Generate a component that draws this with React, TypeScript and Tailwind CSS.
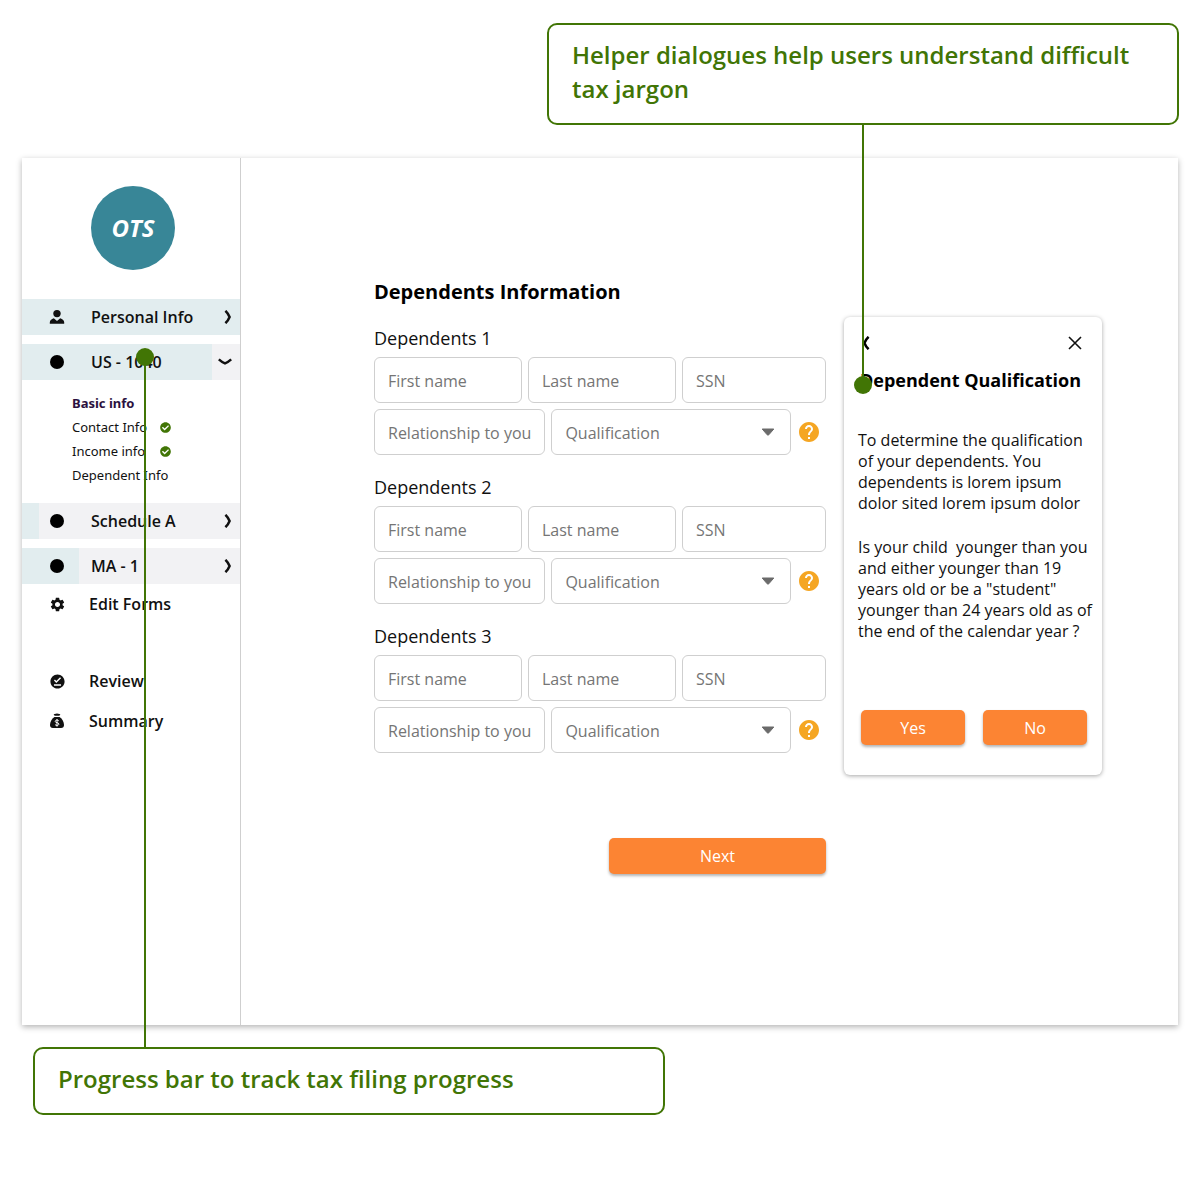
import React from "react";
import { FaCheckCircle } from "react-icons/fa";
import { MdHelp, MdOfflinePin, MdSettings } from "react-icons/md";

function ChevronRight({ className }: { className?: string }) {
  return (
    <svg viewBox="0 0 8 14" className={className} aria-hidden="true">
      <path d="M1.4 0.8 Q4.2 3.4 5.6 7 Q4.2 10.6 1.4 13.2" fill="none" stroke="currentColor" strokeWidth="2.5" />
    </svg>
  );
}

function ChevronDown() {
  return (
    <svg viewBox="0 0 14 8" className="h-2 w-3.5" aria-hidden="true">
      <path d="M0.8 1.4 Q3.6 4 7 5.4 Q10.4 4 13.2 1.4" fill="none" stroke="currentColor" strokeWidth="2.5" />
    </svg>
  );
}

function PersonIcon() {
  return (
    <svg viewBox="0 0 16 16" className="size-4" fill="currentColor" aria-hidden="true">
      <circle cx="8" cy="4.6" r="3.7" />
      <path d="M0.8 14.8v-1.300C0.800 11.400 2.300 10 4.800 9.200L8 12l3.200-2.800c2.500.8 4 2.200 4 4.300v1.300z" />
    </svg>
  );
}

function MoneyBagIcon() {
  return (
    <svg viewBox="0 0 16 16" className="size-4" aria-hidden="true">
      <path d="M4.6 1.2 8 .6l3.400.6-1 1.600H5.600z" fill="currentColor" />
      <path d="M5.400 4h5.200c2.600 1.800 4.400 5 4.400 8 0 2.100-1 3-2.900 3H3.900C2 15 1 14.100 1 12c0-3 1.800-6.200 4.400-8z" fill="currentColor" />
      <path d="M9.800 7.900C9.400 7.300 8.800 7.100 8 7.100c-1 0-1.800.5-1.800 1.300 0 1.800 3.700.8 3.700 2.600 0 .9-.8 1.400-1.900 1.400-.9 0-1.600-.3-2-.9M8 6v7.600" fill="none" stroke="#fff" strokeWidth="1" />
    </svg>
  );
}

const Dot = () => <span className="size-3.5 rounded-full bg-black" />;

type Step = { label: string; icon: React.ReactNode; progress: number; open?: boolean };

function StepRow({ label, icon, progress, open }: Step) {
  return (
    <button
      type="button"
      aria-expanded={!!open}
      className="relative flex h-9 w-full items-center bg-[#f2f2f4] pr-2 pl-[27px] text-left"
    >
      <span className="absolute inset-y-0 left-0 bg-[#e2edef]" style={{ width: `${progress}%` }} />
      <span className="relative flex w-4 justify-center">{icon}</span>
      <span className="relative ml-[26px] flex-1">{label}</span>
      <span className="relative">{open ? <ChevronDown /> : <ChevronRight className="h-3.5 w-2" />}</span>
    </button>
  );
}

function NavLink({ label, icon, className }: { label: string; icon: React.ReactNode; className: string }) {
  return (
    <a href="#" className={`flex h-6 items-center pl-[27px] ${className}`}>
      <span className="flex w-4 justify-center">{icon}</span>
      <span className="ml-6">{label}</span>
    </a>
  );
}

function Sidebar() {
  const sub = [
    { label: "Basic info", current: true },
    { label: "Contact Info", done: true },
    { label: "Income info", done: true },
    { label: "Dependent Info" },
  ];
  return (
    <aside className="w-[219px] shrink-0 border-r border-[#cfcfcf] pt-7 text-base font-semibold text-[#111]">
      <div className="flex justify-center pl-1">
        <div className="flex size-[84px] items-center justify-center rounded-full bg-[#388697] text-2xl font-bold text-white italic">
          OTS
        </div>
      </div>
      <nav className="mt-[29px]">
        <StepRow label="Personal Info" icon={<PersonIcon />} progress={100} />
        <div className="h-[9px]" />
        <StepRow label="US - 1040" icon={<Dot />} progress={87} open />
        <ul className="mt-[11px] mb-4 pl-[50px] font-['Noto_Sans',sans-serif] text-[13px] leading-6 font-normal">
          {sub.map((s) => (
            <li key={s.label} className="flex items-center">
              <a href="#" className={s.current ? "w-[88px] font-bold whitespace-nowrap text-[#2b1140]" : "w-[88px] whitespace-nowrap"}>
                {s.label}
              </a>
              {s.done && <FaCheckCircle className="size-[11px] text-[#417505]" />}
            </li>
          ))}
        </ul>
        <StepRow label="Schedule A" icon={<Dot />} progress={8} />
        <div className="h-[9px]" />
        <StepRow label="MA - 1" icon={<Dot />} progress={26} />
        <NavLink label="Edit Forms" icon={<MdSettings className="size-[17px] shrink-0" />} className="mt-2" />
        <NavLink label="Review" icon={<MdOfflinePin className="size-[17px] shrink-0" />} className="mt-[53px]" />
        <NavLink label="Summary" icon={<MoneyBagIcon />} className="mt-4" />
      </nav>
    </aside>
  );
}

const field =
  "h-[46px] w-full min-w-0 rounded-md border border-[#cfcfcf] bg-white px-[13px] pt-0.5 text-base text-[#757575] placeholder:text-[#757575]";

function DependentFields({ n }: { n: number }) {
  return (
    <fieldset className="mt-[18px] min-w-0">
      <legend className="mb-[5px] text-lg leading-7 text-[#111]">Dependents {n}</legend>
      <div className="grid grid-cols-[148fr_148fr_144fr] gap-1.5">
        <input className={field} placeholder="First name" aria-label={`Dependent ${n} first name`} />
        <input className={field} placeholder="Last name" aria-label={`Dependent ${n} last name`} />
        <input className={field} placeholder="SSN" aria-label={`Dependent ${n} SSN`} />
      </div>
      <div className="mt-1.5 grid grid-cols-[171fr_239fr_auto] items-center gap-1.5 pr-[5px]">
        <input
          className={field}
          placeholder="Relationship to you"
          aria-label={`Dependent ${n} relationship to you`}
        />
        <div className="relative min-w-0">
          <select className={`${field} block appearance-none`} aria-label={`Dependent ${n} qualification`}>
            <option>Qualification</option>
          </select>
          <svg viewBox="0 0 14 8" className="pointer-events-none absolute top-[19px] right-4 h-2 w-3.5" aria-hidden="true">
            <path d="M1.200 1h11.600L7.800 6.800q-.8.800-1.600 0z" fill="#6b6b6b" stroke="#6b6b6b" strokeLinejoin="round" />
          </svg>
        </div>
        <button type="button" aria-label="What does qualification mean?" className="text-[#f5a623]">
          <MdHelp className="size-6" />
        </button>
      </div>
    </fieldset>
  );
}

const orange = "rounded-[5px] bg-[#fc8433] text-base text-white shadow-[0_2px_3px_rgba(0,0,0,0.3)]";

function HelperDialog() {
  return (
    <section
      role="dialog"
      aria-labelledby="helper-title"
      className="mt-[159px] w-[258px] shrink-0 rounded-md bg-white pb-[30px] text-black shadow-[0_1px_4px_rgba(0,0,0,0.35)]"
    >
      <div className="flex items-center justify-between pt-[19px] pr-5 pl-[18px]">
        <button type="button" aria-label="Back">
          <ChevronRight className="h-3.5 w-2 rotate-180" />
        </button>
        <button type="button" aria-label="Close">
          <svg viewBox="0 0 14 14" className="size-3.5" aria-hidden="true">
            <path d="M1 1l12 12M13 1 1 13" stroke="#111" strokeWidth="1.600" />
          </svg>
        </button>
      </div>
      <h2 id="helper-title" className="mt-[18px] pl-4 text-lg leading-6 font-bold whitespace-nowrap">
        Dependent Qualification
      </h2>
      <div className="mt-[38px] pr-2 pl-3.5 text-base leading-[21px] text-[#111]">
        <p>To determine the qualification of your dependents. You dependents is lorem ipsum dolor sited lorem ipsum dolor</p>
        <p className="mt-[23px]">
          Is your child&nbsp; younger than you and either younger than 19 years old or be a "student" younger than 24 years
          old as of the end of the calendar year ?
        </p>
      </div>
      <div className="mt-[68px] flex gap-[18px] pr-[15px] pl-[17px]">
        <button type="button" className={`${orange} h-[35px] flex-1`}>
          Yes
        </button>
        <button type="button" className={`${orange} h-[35px] flex-1`}>
          No
        </button>
      </div>
    </section>
  );
}

const callout =
  "relative z-10 w-full max-w-[632px] rounded-[10px] border-2 border-[#417505] bg-white px-[23px] pt-[13px] pb-[17px] text-2xl leading-[34px] font-semibold text-[#417505]";

export default function App() {
  return (
    <div className="min-h-screen bg-white pt-[23px] font-['Open_Sans',sans-serif]">
      <div className="px-[21px]">
        <div className={`${callout} ml-auto`}>
          Helper dialogues help users understand difficult tax jargon
          <span className="absolute top-full right-[313px] h-[260px] w-0.5 bg-[#417505]" />
          <span className="absolute top-[351px] right-[305px] size-[18px] rounded-full bg-[#417505]" />
        </div>
      </div>

      <div className="mx-[22px] mt-[33px] flex bg-white shadow-[0_2px_6px_rgba(0,0,0,0.3)]">
        <Sidebar />
        <main className="flex min-w-0 flex-1 items-start gap-[18px] pr-[76px] pb-[151px] pl-[133px]">
          <form className="min-w-0 flex-1 pt-[120px]">
            <h1 className="text-xl leading-7 font-bold text-black">Dependents Information</h1>
            <DependentFields n={1} />
            <DependentFields n={2} />
            <DependentFields n={3} />
            <button type="button" className={`${orange} mt-[85px] ml-auto block h-9 w-[217px]`}>
              Next
            </button>
          </form>
          <HelperDialog />
        </main>
      </div>

      <div className="mt-[22px] px-[33px]">
        <div className={callout}>
          Progress bar to track tax filing progress
          <span className="absolute bottom-full left-[109px] h-[690px] w-0.5 bg-[#417505]" />
          <span className="absolute bottom-[747px] left-[101px] size-[18px] rounded-full bg-[#417505]" />
        </div>
      </div>
    </div>
  );
}
